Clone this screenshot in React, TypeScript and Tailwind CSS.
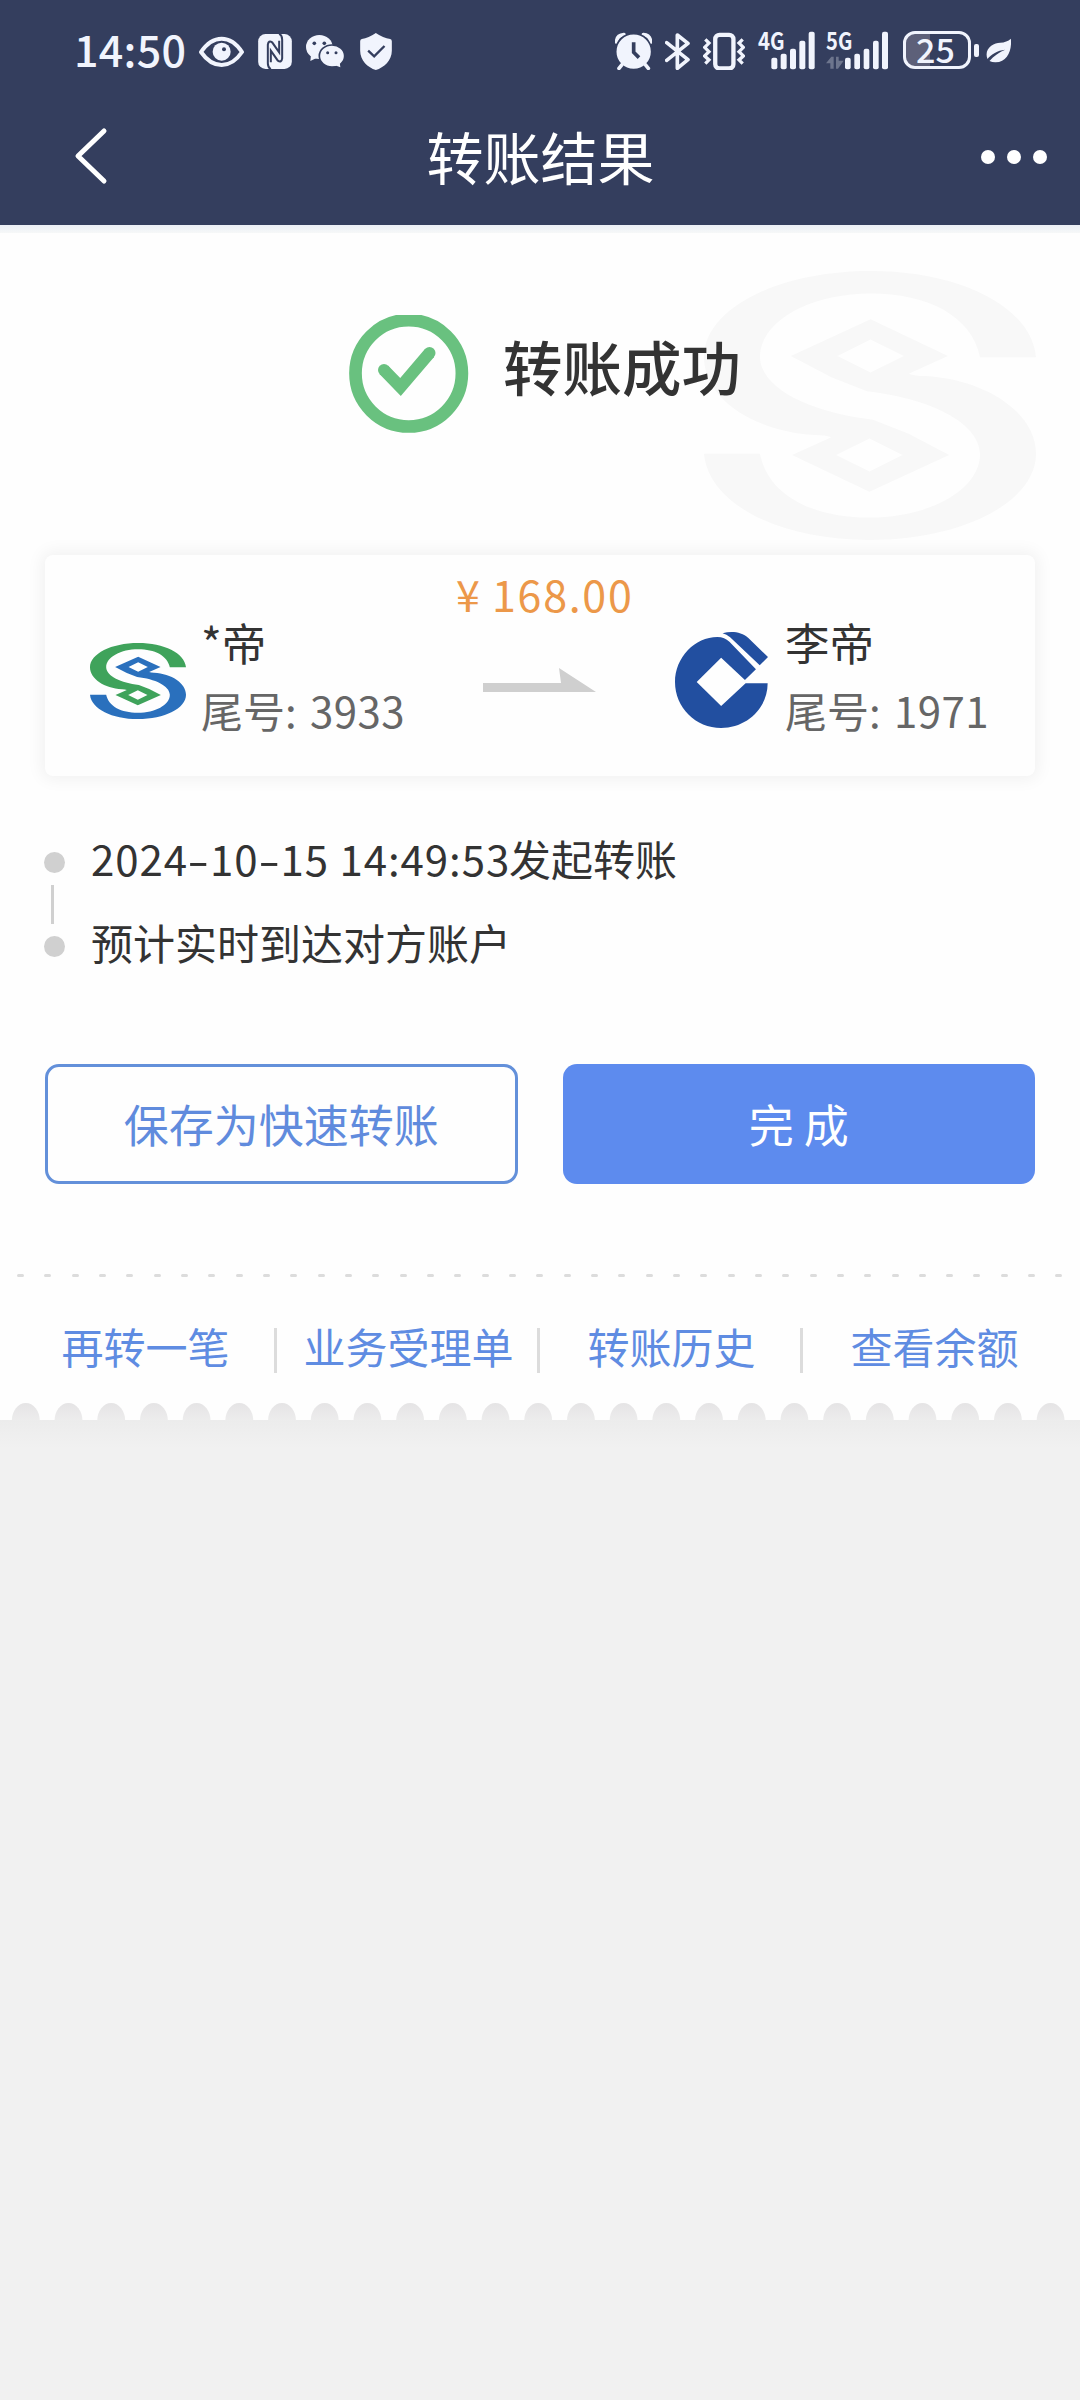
const bumps = Array.from({ length: 25 }, (_, i) => 25.8 + i * 42.7);
const dashes = Array.from({ length: 39 }, (_, i) => i);
const links = ["再转一笔", "业务受理单", "转账历史", "查看余额"];

function BankLogo({
  className,
  top,
  bottom,
}: {
  className: string;
  top: string;
  bottom: string;
}) {
  const half =
    "M279 73C275 30 215 0 140 0C62 0 0 32 0 73C0 108 42 136 93 139Q102 139 107 141L74 156L139 187L206 156L172 138L142 126C90 120 48 100 47 73C47 42 90 19 140 19C188 19 225 38 232 73ZM139 142L167 156L139 170L111 156Z";
  return (
    <svg
      className={className}
      viewBox="0 0 279 228"
      preserveAspectRatio="none"
      fillRule="evenodd"
    >
      <path d={half} fill={top} />
      <path d={half} fill={bottom} transform="rotate(180 139.5 114)" />
    </svg>
  );
}

function CcbLogo() {
  return (
    <svg
      className="w-[93px] h-[96px]"
      viewBox="392 276 270 288"
      preserveAspectRatio="none"
      fill="#224fa0"
    >
      <path d="M661 430C661 505 600 564 526 564C452 564 392 503 392 426C392 352 450 291 515 291C530 291 540 296 550 305L627 388L595 420L526 353L455 426L526 498L597 430Z" />
      <path d="M530 280C555 273 585 275 605 294L662 351L638 376L552 292C545 286 538 282 530 280Z" />
    </svg>
  );
}

function StatusBar() {
  return (
    <div className="flex h-10 items-center text-[#f1f4fd]">
      <span className="-mt-1 ml-[74px] w-[125px] font-['Noto_Sans_CJK_SC','Noto_Sans',sans-serif] text-[43px] font-medium leading-10 tracking-[0.3px]">
        14:50
      </span>
      {/* eye */}
      <svg className="w-[45px] h-10" viewBox="417 30 135 120" fill="none">
        <path
          d="M423 96Q450 56 485 56T546 96Q520 135 485 135T423 96Z"
          stroke="currentColor"
          strokeWidth="12"
          strokeLinejoin="round"
        />
        <circle cx="485" cy="95" r="27" fill="currentColor" />
        <circle cx="492" cy="88" r="6" fill="#343e5e" />
      </svg>
      {/* nfc */}
      <svg className="ml-[14px] w-[34px] h-10" viewBox="595 30 101 120">
        <rect x="595" y="42" width="101" height="105" rx="22" fill="currentColor" />
        <path
          d="M633 148Q624 143 624 130V74Q626 60 637 67L658 97V62M658 41Q667 46 667 59V115Q665 129 654 122L633 92V127"
          fill="none"
          stroke="#343e5e"
          strokeWidth="6"
        />
      </svg>
      {/* wechat */}
      <svg className="ml-[14px] w-[38px] h-10" viewBox="737 30 114 120" fill="currentColor">
        <ellipse cx="777" cy="81" rx="40" ry="36" />
        <path d="M752 105L750 123L770 113Z" />
        <ellipse cx="815" cy="108" rx="38" ry="33" stroke="#343e5e" strokeWidth="5" />
        <path d="M824 136L840 142L838 126Z" />
        <g fill="#343e5e">
          <circle cx="762" cy="70" r="5.500" />
          <circle cx="792" cy="70" r="5.500" />
          <circle cx="802" cy="98" r="4.500" />
          <circle cx="827" cy="98" r="4.500" />
        </g>
      </svg>
      {/* shield */}
      <svg className="ml-4 w-8 h-10" viewBox="899 30 95 120">
        <path
          d="M946 39Q968 54 989 57Q994 58 994 64V92C994 122 970 142 946 150C922 142 899 122 899 92V64Q899 58 904 57Q924 54 946 39Z"
          fill="currentColor"
        />
        <path d="M923 92L941 109L972 78" fill="none" stroke="#343e5e" strokeWidth="7" />
      </svg>

      {/* alarm */}
      <svg className="ml-[223px] w-[37px] h-10" viewBox="45 30 111 120" fill="none" stroke="currentColor">
        <path d="M50 66Q50 46 72 44M130 44Q151 46 152 66" strokeWidth="11" strokeLinecap="round" />
        <circle cx="101" cy="95" r="54" fill="currentColor" stroke="#343e5e" strokeWidth="5" />
        <path d="M66 134L57 145M136 134L145 145" strokeWidth="11" strokeLinecap="round" />
        <path d="M101 67V97L117 113" stroke="#343e5e" strokeWidth="11" />
      </svg>
      {/* bluetooth */}
      <svg className="ml-[13px] w-[25px] h-10" viewBox="195 30 75 120" fill="none">
        <path
          d="M200 68L264 119L232 145V45L264 70L200 121"
          stroke="currentColor"
          strokeWidth="11"
          strokeLinejoin="round"
          strokeLinecap="round"
        />
      </svg>
      {/* vibrate */}
      <svg className="ml-[13px] w-[42px] h-10" viewBox="308 30 127 120" fill="none" stroke="currentColor">
        <rect x="345" y="44" width="55" height="102" rx="13" strokeWidth="13" />
        <path
          d="M315 58L326 69L313 82L326 95L313 108L326 120L315 131M428 58L417 69L430 82L417 95L430 108L417 120L428 131"
          strokeWidth="10"
        />
      </svg>
      {/* 4g signal */}
      <svg className="ml-[13px] w-[57px] h-10 overflow-visible" viewBox="474 30 169 120" fill="currentColor">
        <text x="473" y="90" fontSize="72" fontWeight="700" textLength="80" lengthAdjust="spacingAndGlyphs">
          4G
        </text>
        <rect x="513" y="113" width="18" height="35" rx="6" />
        <rect x="541" y="101" width="18" height="47" rx="6" />
        <rect x="569" y="86" width="18" height="62" rx="6" />
        <rect x="597" y="62" width="18" height="86" rx="6" />
        <rect x="625" y="35" width="18" height="113" rx="6" />
      </svg>
      {/* 5g signal */}
      <svg className="ml-[11px] w-[62px] h-10 overflow-visible" viewBox="676 30 186 120" fill="currentColor">
        <text x="676" y="90" fontSize="72" fontWeight="700" textLength="79" lengthAdjust="spacingAndGlyphs">
          5G
        </text>
        <path d="M676 130L692 110H699V146H689V130ZM706 110H714V122H729L712 146H706Z" opacity=".3" />
        <rect x="733" y="113" width="17" height="35" rx="6" />
        <rect x="761" y="101" width="17" height="47" rx="6" />
        <rect x="789" y="86" width="17" height="62" rx="6" />
        <rect x="817" y="62" width="17" height="86" rx="6" />
        <rect x="844" y="35" width="18" height="113" rx="6" />
      </svg>
      <div className="ml-[15px] flex h-[38px] w-[68px] justify-center rounded-[12px] border-[3px] border-current bg-linear-to-r from-[#5d6079] from-38% to-transparent to-38% pr-[3px] font-['Noto_Sans_CJK_SC','Noto_Sans',sans-serif] text-[34px] font-medium leading-[30px]">
        25
      </div>
      <div className="ml-[3px] h-[13px] w-[5px] rounded-[2px] bg-current"></div>
      {/* leaf */}
      <svg className="ml-[7px] w-[25px] h-10" viewBox="1158 30 74 120">
        <path
          d="M1232 56C1236 90 1222 128 1185 127Q1176 127 1168 123C1180 108 1198 96 1215 89C1192 91 1173 103 1162 117C1150 86 1180 68 1200 68Q1220 67 1232 56Z"
          fill="currentColor"
        />
      </svg>
    </div>
  );
}

function Account({ name, tail }: { name: string; tail: string }) {
  return (
    <div className="flex flex-col">
      <p className="text-[44.500px] leading-[60px] text-[#333]">{name}</p>
      <p className="mt-[8px] text-[42px] leading-[60px] text-[#666] whitespace-nowrap">
        尾号: <span className="ml-1 tracking-[0.4px]">{tail}</span>
      </p>
    </div>
  );
}

function Hyphen() {
  return <span className="inline-block w-[22px] scale-x-150 text-center">-</span>;
}

export default function App() {
  return (
    <main className="w-[1080px] h-[2400px] flex flex-col bg-[#f1f1f1] font-['Noto_Sans_CJK_SC',sans-serif]">
      <header className="h-[225px] flex flex-col bg-[#343e5e] pt-[30px]">
        <StatusBar />
        <nav className="mt-[47px] flex h-20 items-center justify-between pl-[73px] pr-[33px] text-white">
          <svg className="w-[83px] h-[60px]" viewBox="0 0 83 60" fill="none">
            <path
              d="M31 4L5 29L31 54"
              stroke="currentColor"
              strokeWidth="5"
              strokeLinecap="round"
              strokeLinejoin="round"
            />
          </svg>
          <h1 className="-ml-[56px] -mt-1 text-[57px] leading-20">转账结果</h1>
          <span className="flex gap-x-3">
            <i className="size-[14px] rounded-full bg-white"></i>
            <i className="size-[14px] rounded-full bg-white"></i>
            <i className="size-[14px] rounded-full bg-white"></i>
          </span>
        </nav>
      </header>

      <section className="relative flex h-[1195px] flex-col bg-[#fefefe] pt-[90px]">
        <div className="absolute inset-x-0 top-0 h-2 bg-linear-to-b from-[#ebeff6] to-[#f6f8f8]"></div>
        <BankLogo
          className="absolute left-[704px] top-[46px] w-[332px] h-[269px]"
          top="#f8f8f8"
          bottom="#f8f8f8"
        />
        <div className="relative ml-[349px] flex h-[118px]">
          <svg className="w-[120px] h-[118px]" viewBox="0 0 120 118" fill="none" stroke="#69c17f">
            <circle cx="59.700" cy="58.300" r="53.200" strokeWidth="12.700" />
            <path d="M35 55L51.500 72L80.500 38" strokeWidth="12" />
            <circle cx="35" cy="55" r="6" fill="#69c17f" stroke="none" />
            <circle cx="80.500" cy="38" r="6" fill="#69c17f" stroke="none" />
          </svg>
          <h2 className="ml-[34px] mt-[10px] text-[59.500px] font-medium leading-20 text-[#333]">
            转账成功
          </h2>
        </div>

        <article className="relative mx-[45px] mt-[122px] flex h-[221px] flex-col rounded-lg bg-[#fefefe] shadow-[0_0_16px_4px_rgba(0,0,0,0.05)]">
          <p className="mt-[9px] h-[60px] pl-[411px] text-[43px] leading-[58px] tracking-[1.7px] text-[#ec9849]">
            <span className="inline-block w-[36px]">¥</span>168.00
          </p>
          <div className="flex h-[130px] pl-[45px]">
            <BankLogo
              className="mt-[19px] w-[96px] h-[76px]"
              top="#3fa35b"
              bottom="#2a70bd"
            />
            <div className="-mt-[12px] ml-[15px] w-[235px]">
              <Account name="*帝" tail="3933" />
            </div>
            <svg className="ml-[47px] mt-[44px] w-[113px] h-6" viewBox="0 0 113 24">
              <path d="M0 15H78L76 0L113 24H0Z" fill="#cfcfcf" />
            </svg>
            <div className="ml-[79px] mt-2">
              <CcbLogo />
            </div>
            <div className="-mt-[12px] ml-[17px]">
              <Account name="李帝" tail="1971" />
            </div>
          </div>
        </article>

        <div className="ml-11 mt-[54px] flex">
          <div className="flex w-[47px] flex-col pt-[22px]">
            <i className="size-[21px] rounded-full bg-[#d0d0d0]"></i>
            <i className="my-3 ml-[7px] h-[39px] w-[3px] bg-[#d0d0d0]"></i>
            <i className="size-[21px] rounded-full bg-[#d0d0d0]"></i>
          </div>
          <div className="-mt-0.5 text-[42px] leading-[60px] text-[#333]">
            <p>
              <span className="inline-block w-[418px] whitespace-nowrap tracking-[0.95px]">
                2024
                <Hyphen />
                10
                <Hyphen />
                15 14:49:53
              </span>
              发起转账
            </p>
            <p className="mt-6">预计实时到达对方账户</p>
          </div>
        </div>

        <div className="mx-[45px] mt-[92px] grid h-[120px] grid-cols-2 gap-x-[45px] text-[45px]">
          <button className="rounded-[14px] border-[3px] border-[#6390da] text-[#608bdd]">
            保存为快速转账
          </button>
          <button className="rounded-[14px] bg-[#5d8bee] text-white">完 成</button>
        </div>

        <div className="mx-[17px] mt-[90px] flex justify-between">
          {dashes.map((d) => (
            <i key={d} className="h-[3px] w-[7px] rounded-full bg-[#dcdcdc]"></i>
          ))}
        </div>

        <div className="mx-[14px] mt-[51px] grid h-[45px] grid-cols-4 divide-x-3 divide-[#dcdcdc] text-center text-[42px] leading-[35px] text-[#5f8ce2]">
          {links.map((l) => (
            <a key={l} className="pl-[3px] last:pl-0">
              {l}
            </a>
          ))}
        </div>
      </section>

      {/* torn receipt edge, its notches reach up into the white part */}
      <svg className="-mt-[17px] relative w-[1080px] h-[45px]" viewBox="0 0 1080 45">
        <defs>
          <linearGradient id="edge" x1="0" y1="0" x2="0" y2="1">
            <stop offset="0" stopColor="#e5e4e5" />
            <stop offset="1" stopColor="#ededed" />
          </linearGradient>
          <linearGradient id="base" x1="0" y1="0" x2="0" y2="1">
            <stop offset="0" stopColor="#ececec" />
            <stop offset="1" stopColor="#f1f1f1" />
          </linearGradient>
        </defs>
        <rect y="17" width="1080" height="28" fill="url(#base)" />
        {bumps.map((x) => (
          <path
            key={x}
            d={`M${x - 14} 18A14 18 0 0 1 ${x + 14} 18Z`}
            fill="url(#edge)"
          />
        ))}
      </svg>
    </main>
  );
}
